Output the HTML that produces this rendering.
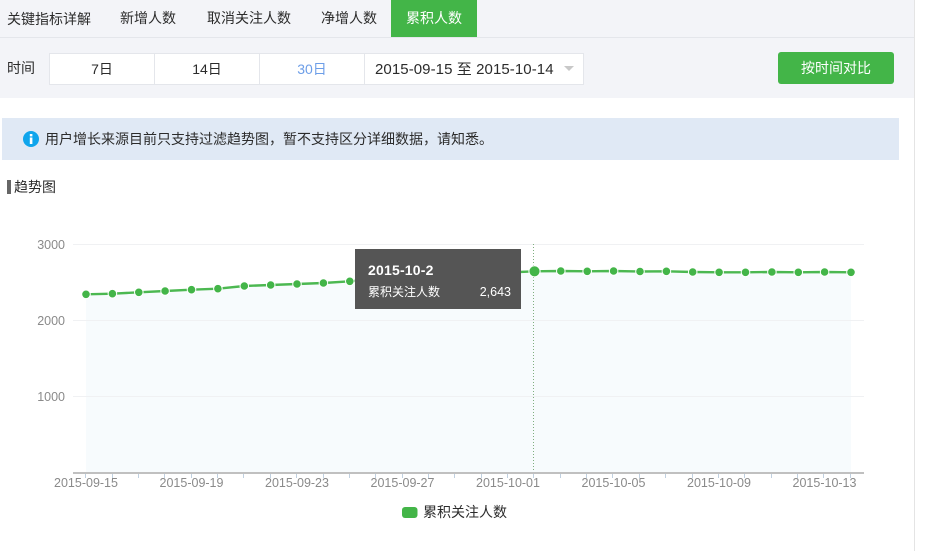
<!DOCTYPE html>
<html lang="zh-CN"><head><meta charset="utf-8"><title>累积人数</title>
<style>
html,body{margin:0;padding:0;background:#fff;width:929px;height:551px;overflow:hidden}
body{position:relative;font-family:"Liberation Sans","WenQuanYi Zen Hei","Noto Sans CJK SC",sans-serif;font-size:14px;color:#2b2b2b}
div{position:absolute;box-sizing:border-box}
.t{white-space:nowrap;line-height:20px;height:20px}
.seg{top:0;height:30px;line-height:30px;text-align:center;border-right:1px solid #e4e6eb}
svg text{font-family:"Liberation Sans","WenQuanYi Zen Hei","Noto Sans CJK SC",sans-serif}
</style></head><body>
<div style="left:0;top:0;width:914px;height:98px;background:#f3f4f8"></div>
<div style="left:0;top:37px;width:914px;height:1px;background:#e4e6eb"></div>
<div style="left:914px;top:0;width:1px;height:551px;background:#e4e4e4"></div>
<div style="left:391px;top:0;width:86px;height:37px;background:#43b548"></div>
<div class="t" style="left:7px;top:9px">关键指标详解</div>
<div class="t" style="left:120px;top:8px">新增人数</div>
<div class="t" style="left:207px;top:8px">取消关注人数</div>
<div class="t" style="left:321px;top:8px">净增人数</div>
<div class="t" style="left:406px;top:8px;color:#fff">累积人数</div>
<div class="t" style="left:7px;top:58px">时间</div>
<div style="left:49px;top:53px;width:535px;height:32px;background:#fff;border:1px solid #e4e6eb">
<div class="seg" style="left:0;width:105px;top:0">7日</div>
<div class="seg" style="left:105px;width:105px;top:0">14日</div>
<div class="seg" style="left:210px;width:105px;top:0;color:#6d9ee8">30日</div>
<div class="t" style="left:325px;top:6px;font-size:15px;letter-spacing:.08px">2015-09-15 至 2015-10-14</div>
<div style="left:514px;top:12px;width:0;height:0;border-left:5px solid transparent;border-right:5px solid transparent;border-top:5px solid #c8c8c8"></div>
</div>
<div style="left:778px;top:52px;width:116px;height:32px;background:#43b548;border-radius:3px;color:#fff;text-align:center;line-height:32px">按时间对比</div>
<div style="left:2px;top:118px;width:897px;height:42px;background:#e0e9f5"></div>
<svg style="position:absolute;left:23px;top:131px" width="16" height="16" viewBox="0 0 16 16"><circle cx="8" cy="8" r="8" fill="#0fa5ec"/><rect x="6.8" y="6.5" width="2.6" height="6.5" fill="#fff"/><rect x="6.8" y="3" width="2.6" height="2.4" fill="#fff"/></svg>
<div class="t" style="left:45px;top:129px">用户增长来源目前只支持过滤趋势图，暂不支持区分详细数据，请知悉。</div>
<div style="left:7px;top:180px;width:4px;height:14px;background:#666"></div>
<div class="t" style="left:14px;top:177px">趋势图</div>
<svg style="position:absolute;left:0;top:0" width="929" height="551" viewBox="0 0 929 551">
<path d="M86 473V294.3L112.4 293.7 138.8 292.3 165.1 291 191.5 289.7 217.9 288.7 244.3 286 270.7 285 297 284 323.4 283 349.8 281.3 376.2 279 402.6 277.5 428.9 276 455.3 275 481.7 274 508.1 272.5 534.5 271.3 560.8 271 587.2 271.3 613.6 271 640 271.5 666.4 271.3 692.7 272 719.1 272.3 745.5 272.3 771.9 272 798.3 272.3 824.6 272 851 272.3V473Z" fill="#f7fbfd"/>
<path d="M73 244.5H864M73 320.5H864M73 396.5H864" stroke="#f0f1f3" stroke-width="1" fill="none"/>
<path d="M85.5 474v4M112.5 474v4M138.5 474v4M164.5 474v4M191.5 474v4M217.5 474v4M243.5 474v4M270.5 474v4M296.5 474v4M323.5 474v4M349.5 474v4M375.5 474v4M402.5 474v4M428.5 474v4M454.5 474v4M481.5 474v4M507.5 474v4M533.5 474v4M560.5 474v4M586.5 474v4M612.5 474v4M639.5 474v4M665.5 474v4M692.5 474v4M718.5 474v4M744.5 474v4M771.5 474v4M797.5 474v4M823.5 474v4M850.5 474v4" stroke="#c0d0e0" stroke-width="1" fill="none"/>
<rect x="73" y="472" width="791" height="2" fill="#c0c0c0"/>
<path d="M533.5 244V472" stroke="#7fae7f" stroke-width="1" stroke-dasharray="1 2" fill="none"/>
<polyline points="86,294.3 112.4,293.7 138.8,292.3 165.1,291 191.5,289.7 217.9,288.7 244.3,286 270.7,285 297,284 323.4,283 349.8,281.3 376.2,279 402.6,277.5 428.9,276 455.3,275 481.7,274 508.1,272.5 534.5,271.3 560.8,271 587.2,271.3 613.6,271 640,271.5 666.4,271.3 692.7,272 719.1,272.3 745.5,272.3 771.9,272 798.3,272.3 824.6,272 851,272.3" fill="none" stroke="#4cb851" stroke-width="2.4"/>
<g fill="#43b548" stroke="#fff" stroke-width="1">
<circle cx="86" cy="294.3" r="4.3"/><circle cx="112.4" cy="293.7" r="4.3"/><circle cx="138.8" cy="292.3" r="4.3"/><circle cx="165.1" cy="291" r="4.3"/><circle cx="191.5" cy="289.7" r="4.3"/><circle cx="217.9" cy="288.7" r="4.3"/><circle cx="244.3" cy="286" r="4.3"/><circle cx="270.7" cy="285" r="4.3"/><circle cx="297" cy="284" r="4.3"/><circle cx="323.4" cy="283" r="4.3"/><circle cx="349.8" cy="281.3" r="4.3"/><circle cx="534.5" cy="271.3" r="5.6"/><circle cx="560.8" cy="271" r="4.3"/><circle cx="587.2" cy="271.3" r="4.3"/><circle cx="613.6" cy="271" r="4.3"/><circle cx="640" cy="271.5" r="4.3"/><circle cx="666.4" cy="271.3" r="4.3"/><circle cx="692.7" cy="272" r="4.3"/><circle cx="719.1" cy="272.3" r="4.3"/><circle cx="745.5" cy="272.3" r="4.3"/><circle cx="771.9" cy="272" r="4.3"/><circle cx="798.3" cy="272.3" r="4.3"/><circle cx="824.6" cy="272" r="4.3"/><circle cx="851" cy="272.3" r="4.3"/>
</g>
<g font-size="12.5" fill="#8a8a8a" text-anchor="end">
<text x="65" y="249">3000</text><text x="65" y="325">2000</text><text x="65" y="401">1000</text>
</g>
<g font-size="12.5" fill="#8a8a8a" text-anchor="middle">
<text x="86" y="487">2015-09-15</text><text x="191.5" y="487">2015-09-19</text><text x="297" y="487">2015-09-23</text><text x="402.5" y="487">2015-09-27</text><text x="508" y="487">2015-10-01</text><text x="613.5" y="487">2015-10-05</text><text x="719" y="487">2015-10-09</text><text x="824.5" y="487">2015-10-13</text>
</g>
<rect x="402" y="507" width="15.5" height="11" rx="3" fill="#43b548"/>
<text x="423" y="517" font-size="14" fill="#2b2b2b">累积关注人数</text>
</svg>
<div style="left:355px;top:249px;width:166px;height:60px;background:#555"></div>
<div class="t" style="left:368px;top:260px;color:#fff;font-weight:bold;font-size:14px;letter-spacing:.2px">2015-10-2</div>
<div class="t" style="left:368px;top:282px;color:#fff;font-size:12px">累积关注人数</div>
<div class="t" style="left:461px;width:50px;text-align:right;top:282px;color:#fff;font-size:12.5px">2,643</div>
</body></html>
